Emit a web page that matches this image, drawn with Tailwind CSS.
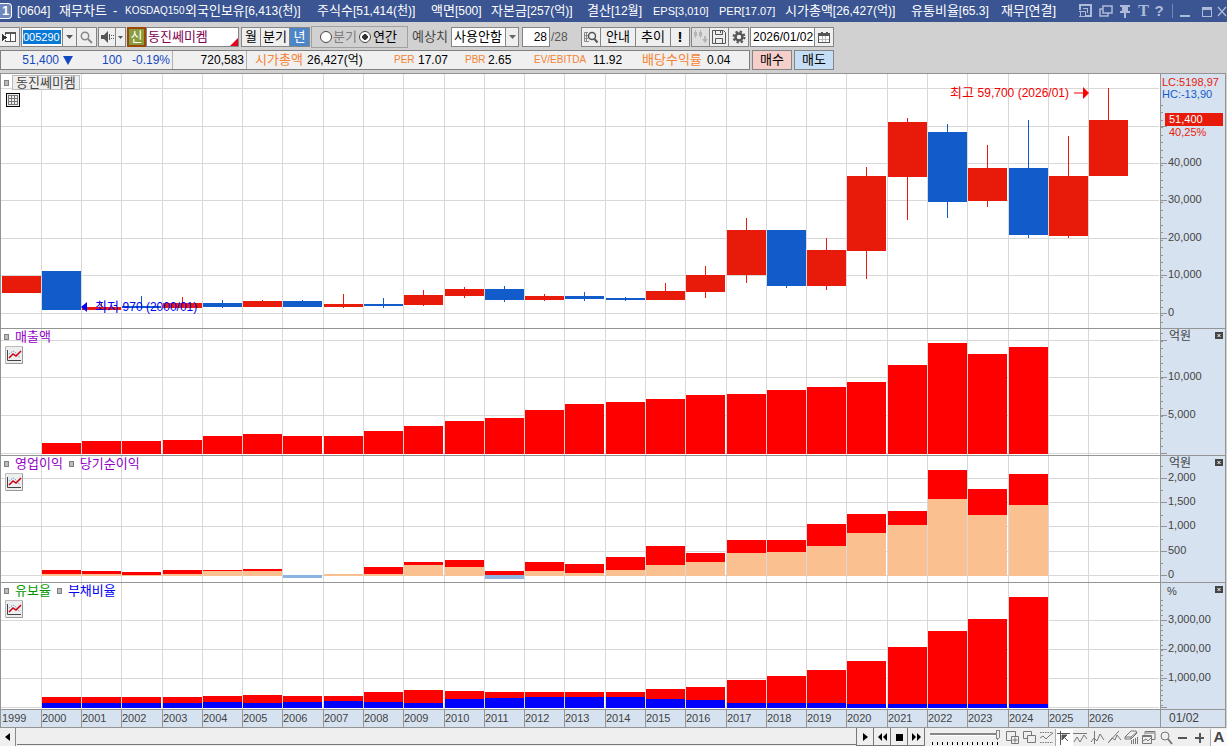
<!DOCTYPE html>
<html lang="ko">
<head>
<meta charset="utf-8">
<title>[0604] 재무차트</title>
<script src="https://cdn.jsdelivr.net/npm/@tailwindcss/browser@4"></script>
</head>
<body class="h-screen min-w-[1100px] flex flex-col overflow-hidden bg-[#d1d1d1] text-black text-[13px] leading-4 whitespace-nowrap font-['Liberation_Sans','Noto_Sans_CJK_KR',sans-serif]">

<header class="h-[22px] shrink-0 flex items-center bg-[#3a5592] text-white">
  <span class="w-3 h-4 mr-[5px] border border-l-0 border-white rounded-r-sm bg-[#6d86bb] text-center leading-[14px] font-bold">1</span>
  <h1 class="flex gap-[6px] shrink-0 *:shrink-0">
    <span class="w-9 text-xs leading-4">[0604]</span><span class="w-12">재무차트</span><span class="w-1.5">-</span><span class="w-[54px] text-[10px] leading-4">KOSDAQ150</span>
    <span class="w-[126px]">외국인보유<span class="text-xs">[6,413(천)]</span></span><span class="w-[108px]">주식수<span class="text-xs">[51,414(천)]</span></span><span class="w-[54px]">액면<span class="text-xs">[500]</span></span>
    <span class="w-[90px]">자본금<span class="text-xs">[257(억)]</span></span><span class="w-[60px]">결산<span class="text-xs">[12월]</span></span><span class="w-[60px] text-[11px] leading-4">EPS[3,010]</span><span class="w-[60px] text-[11px] leading-4">PER[17.07]</span>
    <span class="w-[120px]">시가총액<span class="text-xs">[26,427(억)]</span></span><span class="w-[84px]">유통비율<span class="text-xs">[65.3]</span></span><span>재무[연결]</span>
  </h1>
  <div class="ml-auto flex items-center text-[#aebbd8]">
    <button aria-label="축소" class="w-5"><svg width="14" height="14" fill="none" stroke="currentColor" shape-rendering="crispEdges"><path d="M1 6V1h11v11H7" stroke-width="2"/><path d="M0 7.500h6.500V13M1.500 7v5M0 12.500h8M4 4.500h4.500V9"/></svg></button>
    <button aria-label="복제" class="w-5"><svg width="14" height="14" fill="none" stroke="currentColor" stroke-width="1.500"><path d="M4 2h9v7H4zM4 5H1v7h8V9"/></svg></button>
    <button aria-label="고정" class="w-[18px]"><svg width="12" height="14" fill="currentColor"><path d="M1 1h10v2H9v4h2v2H7v5H5V9H1V7h2V3H1z"/></svg></button>
    <button aria-label="글꼴" class="w-[13px] mr-1 font-bold text-[16px] font-['Liberation_Serif']">T</button>
    <button aria-label="도움말" class="w-[10px] mr-2 font-bold text-[15px]">?</button>
    <span class="w-px h-3.5 mr-[7px] bg-[#7388b8]"></span>
    <button aria-label="최소화" class="w-[22px]"><svg width="12" height="14" fill="currentColor"><path d="M0 11h10v2H0z"/></svg></button>
    <button aria-label="최대화" class="w-[15px]"><svg width="12" height="14" fill="none" stroke="currentColor" shape-rendering="crispEdges"><path d="M.5 3.500h9v9h-9z"/><path d="M0 4h10" stroke-width="3"/></svg></button>
    <button aria-label="닫기" class="w-[10px]"><svg width="10" height="14" fill="none" stroke="currentColor" stroke-width="1.200"><path d="M1 3l8 9M9 3l-8 9"/></svg></button>
  </div>
</header>

<div class="h-7 shrink-0 flex items-center pt-0.5 *:shrink-0">
  <button aria-label="창 목록" class="w-5 h-5 mr-px border border-l-0 border-[#858585] bg-[#efefef] flex items-center justify-center"><svg width="15" height="14" shape-rendering="crispEdges"><path d="M3.500 5V2.500h10v9h-10V10" fill="#fff" stroke="#555"/><path d="M4 2h10v2H4zM8 2h1v9H8z" fill="#555"/><path d="M0 4l5 3.500L0 11z" fill="#333"/></svg></button>
  <div class="flex h-5 border border-[#858585] divide-x divide-[#858585] bg-[#efefef] mr-px">
    <label class="w-[41px] bg-white py-0.5 px-px"><input aria-label="종목코드" value="005290" class="block w-[38px] h-3.5 bg-[#0878d7] text-white text-[11px] outline-none"></label>
    <button aria-label="종목 목록" class="w-[14px] flex items-center justify-center"><svg width="7" height="4" fill="#555"><path d="M0 0h7L3.500 4z"/></svg></button>
    <button aria-label="종목 검색" class="w-[19px] flex items-center justify-center"><svg width="13" height="13" fill="none" stroke="#888" stroke-width="1.500"><circle cx="5" cy="5" r="3.700"/><path d="M8 8l4 4" stroke-width="2"/></svg></button>
  </div>
  <div class="flex h-5 border border-[#858585] divide-x divide-[#858585] bg-[#efefef] mr-px">
    <button aria-label="소리" class="w-[17px] flex items-center justify-center"><svg width="15" height="12" fill="#555"><path d="M1 4h3l4-4v12L4 8H1z"/><path d="M9 3h1v6H9zM11 4h1v1h-1zM11 7h1v1h-1zM13 4h1v1h-1zM13 7h1v1h-1z"/></svg></button>
    <button aria-label="소리 메뉴" class="w-[9px] flex items-center justify-center"><svg width="5" height="3" fill="#555"><path d="M0 0h5L2.500 3z"/></svg></button>
  </div>
  <div class="flex h-5 mr-0.5">
    <button class="w-[19px] border-2 border-[#984807] bg-[#8a9a3c] text-white text-center leading-[14px]">신</button>
    <span class="relative w-[93px] border border-[#858585] bg-white text-[#800050] pl-px leading-[18px]">동진쎄미켐<svg class="absolute right-0 bottom-0" width="8" height="8" fill="#e00020"><path d="M8 0v8H0z"/></svg></span>
  </div>
  <div class="flex h-5 border border-[#858585] divide-x divide-[#858585] bg-[#efefef] mr-px leading-[18px]">
    <button class="w-[19px]">월</button><button class="w-[29px]">분기</button><button class="w-[19px] bg-[#4d86c6] text-white">년</button>
  </div>
  <fieldset class="flex items-center h-[22px] w-[97px] border border-[#a0a0a0] pl-1.5">
    <label class="flex items-center gap-px text-[#7d7d7d]"><input type="radio" name="term" class="appearance-none m-0.5 mr-0 size-3 rounded-full border border-[#444] bg-white">분기</label>
    <label class="flex items-center gap-0.5"><input type="radio" name="term" checked class="appearance-none m-0.5 mr-0 size-3 rounded-full border border-[#444] bg-white checked:bg-[radial-gradient(#333_38%,white_42%)]">연간</label>
  </fieldset>
  <label for="est" class="ml-1 w-[39px] text-[#444]">예상치</label>
  <div class="relative w-[68px] h-5 mr-[3px]">
    <select id="est" class="appearance-none block w-full h-5 border border-[#858585] bg-white pl-0.5 outline-none"><option>사용안함</option></select>
    <span class="absolute right-px inset-y-px w-[13px] border-l border-[#858585] bg-[#efefef] flex items-center justify-center pointer-events-none"><svg width="7" height="4" fill="#666"><path d="M0 0h7L3.500 4z"/></svg></span>
  </div>
  <input aria-label="표시 개수" value="28" class="w-7 h-5 border border-[#858585] bg-white text-right text-xs pr-0.5"><span class="w-[31px] text-xs text-[#555] pl-px">/28</span>
  <div class="flex h-5 border border-[#858585] divide-x divide-[#858585] bg-[#efefef] mr-px">
    <button aria-label="표 검색" class="w-[19px] flex items-center justify-center"><svg width="16" height="14" fill="none" stroke="#888"><path d="M5 2.500H1.500v9H6M1 5.500h4M1 8.500h4M3.500 2v9"/><circle cx="9" cy="6" r="3.500" stroke="#555" stroke-width="1.500"/><path d="M11.500 9l3 3.500" stroke="#555" stroke-width="2"/></svg></button>
    <button class="w-[35px]">안내</button><button class="w-[35px]">추이</button><button class="w-[18px] font-bold text-[15px]">!</button>
  </div>
  <div class="flex h-5 border border-[#858585] divide-x divide-[#858585] bg-[#efefef] mr-px">
    <button aria-label="캔들" class="w-[18px] flex items-center justify-center bg-[#dedede]"><svg width="15" height="14" fill="#b5b5b5"><path d="M2 0h1v2h1v4H3v2H2V6H1V2h1zM7 0h1v2h1v4H8v2H7V6H6V2h1zM11 6h2v3h2l-3 4-3-4h2z"/></svg></button>
    <button aria-label="저장" class="w-[19px] flex items-center justify-center"><svg width="14" height="14" fill="#eee" stroke="#555"><path d="M.5.5h11l2 2v11H.5zM3.500.5v4h7v-4M3.500 13.500v-5h7v5M8.500 1v2"/></svg></button>
    <button aria-label="설정" class="w-[19px] flex items-center justify-center"><svg width="14" height="14" fill="none" stroke="#555"><circle cx="7" cy="7" r="3.500" stroke-width="2.500"/><circle cx="7" cy="7" r="5.500" stroke-width="2" stroke-dasharray="2.300 2.020"/></svg></button>
  </div>
  <div class="flex h-5 border border-[#858585] divide-x divide-[#858585]">
    <input aria-label="날짜" value="2026/01/02" class="w-[64px] bg-white pl-0.5 text-xs">
    <button aria-label="달력" class="w-[18px] bg-[#efefef] flex items-center justify-center"><svg width="12" height="11" fill="none" stroke="#555" shape-rendering="crispEdges"><path d="M.5 1.500h11v9H.5z" fill="#fff"/><path d="M0 2.500h12M3.500 0v3M8.500 0v3" stroke-width="2"/><path d="M1 7.500h10M4.500 4v6M7.500 4v6" stroke="#bbb"/></svg></button>
  </div>
</div>

<div class="h-5 shrink-0 flex gap-0.5 leading-[18px]">
  <dl class="flex w-[750px] border border-[#808080] bg-[#f0f0f0] divide-x divide-[#b0b0b0] text-xs leading-[18px]">
    <div class="flex w-[172px] text-[#1548c0] justify-end pr-0.5"><dd class="flex items-center">51,400<svg class="ml-1" width="10" height="9" fill="#1548c0"><path d="M0 0h10L5 9z"/></svg></dd><dd class="w-[49px] text-right">100</dd><dd class="w-[48px] text-right">-0.19%</dd></div>
    <dd class="w-[74px] text-right pr-0.5">720,583</dd>
    <div class="flex flex-1 pl-2">
      <dt class="w-[52px] text-[#f58233] text-[13px]">시가총액</dt><dd class="w-[87px]">26,427(억)</dd>
      <dt class="w-6 text-[#f58233] text-[10px]">PER</dt><dd class="w-[47px]">17.07</dd>
      <dt class="w-[23px] text-[#f58233] text-[10px]">PBR</dt><dd class="w-[46px]">2.65</dd>
      <dt class="w-[59px] text-[#f58233] text-[10px]">EV/EBITDA</dt><dd class="w-[49px]">11.92</dd>
      <dt class="w-[65px] text-[#f58233] text-[13px]">배당수익률</dt><dd>0.04</dd>
    </div>
  </dl>
  <button class="w-10 border border-[#858585] bg-[#f7cfca]">매수</button>
  <button class="w-10 border border-[#858585] bg-[#c6def5]">매도</button>
</div>

<main class="mt-[3px] mr-px flex-1 min-h-0 flex flex-col border border-[#949494] bg-white text-[#444]">
  <div class="flex-1 min-h-0 grid grid-rows-[254fr_126fr_126fr_126fr] gap-px bg-[#949494]">

    <section class="relative flex min-h-0 bg-white">
      <svg id="price" class="flex-1 min-w-0 h-full" viewBox="1 74 1159 254" preserveAspectRatio="none" shape-rendering="crispEdges"></svg>
      <div id="priceAxis" class="relative w-[65px] shrink-0 border-l border-[#949494] bg-[#d7e2f0]"></div>
      <div class="absolute left-[3px] top-px flex items-center gap-[3px]"><span class="w-[5px] h-1.5 border border-[#808080] bg-[#bbb]"></span><span class="h-[15px] leading-[14px] px-[3px] border border-[#bbb] bg-[#eee]">동진쎄미켐</span></div>
      <button aria-label="데이터 표" class="absolute left-[5px] top-[19px]"><svg width="14" height="14" fill="none" shape-rendering="crispEdges"><path d="M.5.500h13v13H.5z" fill="#eee" stroke="#000"/><path d="M2.500 2.500h9v9h-9zM2 5.500h9M2 8.500h9M5.500 2v9M8.500 2v9" stroke="#777"/></svg></button>
      <span class="absolute left-[80px] top-[225px] flex items-center gap-[8px] text-[#0000f0]"><svg width="6" height="10" fill="#00f"><path d="M0 5l6-5v10z"/></svg><span>최저 <span class="text-xs">970 (2000/01)</span></span></span>
      <span class="absolute right-[136px] top-[11px] flex items-center gap-[5px] text-[#f00000]"><span>최고 <span class="text-xs">59,700 (2026/01)</span></span><svg width="15" height="12" fill="#f00"><path d="M0 5.500h9V0l6 6-6 6V6.500H0z"/></svg></span>
      <div class="absolute right-0 top-0 w-[65px] pl-0.5 text-[11px] leading-3 pt-0.5"><p class="text-[#e81a0a]">LC:5198,97</p><p class="text-[#125bca]">HC:-13,90</p></div>
      <div class="absolute right-[2px] top-[39px] w-[58px] text-[#e81a0a] text-[11px] leading-[13px]"><p class="bg-[#e81a0a] text-white pl-1">51,400</p><p class="pl-1">40,25%</p></div>
    </section>

    <section class="relative flex min-h-0 bg-white">
      <svg id="sales" class="flex-1 min-w-0 h-full" viewBox="1 329 1159 126" preserveAspectRatio="none" shape-rendering="crispEdges"></svg>
      <div id="salesAxis" class="relative w-[65px] shrink-0 border-l border-[#949494] bg-[#d7e2f0]"></div>
      <div class="absolute left-[3px] top-0 flex items-center gap-[6px] text-[#9400c8]"><span class="w-[5px] h-1.5 border border-[#808080] bg-[#bbb]"></span>매출액</div>
      <button aria-label="매출액 차트" class="absolute left-1 top-[17px]"><svg width="18" height="18"><use href="#chartIcon"/></svg></button>
      <span class="absolute right-[34px] top-0 text-xs leading-[14px]">억원</span><button aria-label="매출액 닫기" class="absolute right-[2px] top-[3px]"><svg width="8" height="7"><use href="#closeIcon"/></svg></button>
    </section>

    <section class="relative flex min-h-0 bg-white">
      <svg id="profit" class="flex-1 min-w-0 h-full" viewBox="1 456 1159 126" preserveAspectRatio="none" shape-rendering="crispEdges"></svg>
      <div id="profitAxis" class="relative w-[65px] shrink-0 border-l border-[#949494] bg-[#d7e2f0]"></div>
      <div class="absolute left-[3px] top-0 flex items-center gap-[6px] text-[#9400c8]"><span class="w-[5px] h-1.5 border border-[#808080] bg-[#bbb]"></span>영업이익<span class="w-[5px] h-1.5 border border-[#808080] bg-[#bbb]"></span>당기순이익</div>
      <button aria-label="이익 차트" class="absolute left-1 top-[17px]"><svg width="18" height="18"><use href="#chartIcon"/></svg></button>
      <span class="absolute right-[34px] top-0 text-xs leading-[14px]">억원</span><button aria-label="이익 닫기" class="absolute right-[2px] top-[3px]"><svg width="8" height="7"><use href="#closeIcon"/></svg></button>
    </section>

    <section class="relative flex min-h-0 bg-white">
      <svg id="ratio" class="flex-1 min-w-0 h-full" viewBox="1 583 1159 126" preserveAspectRatio="none" shape-rendering="crispEdges"></svg>
      <div id="ratioAxis" class="relative w-[65px] shrink-0 border-l border-[#949494] bg-[#d7e2f0]"></div>
      <div class="absolute left-[3px] top-0 flex items-center gap-[6px] text-[#009600]"><span class="w-[5px] h-1.5 border border-[#808080] bg-[#bbb]"></span>유보율<span class="w-[5px] h-1.5 border border-[#808080] bg-[#bbb]"></span><span class="text-[#0000f0]">부채비율</span></div>
      <button aria-label="비율 차트" class="absolute left-1 top-[17px]"><svg width="18" height="18"><use href="#chartIcon"/></svg></button>
      <span class="absolute left-[calc(100%_-_58px)] top-0 text-[11px]">%</span><button aria-label="비율 닫기" class="absolute right-[2px] top-[3px]"><svg width="8" height="7"><use href="#closeIcon"/></svg></button>
    </section>
  </div>

  <div class="h-[18px] shrink-0 flex border-t border-[#949494] bg-[#d7e2f0] text-[11px] leading-[16px]">
    <div id="years" class="flex-1 grid grid-cols-[40fr_40fr_40fr_41fr_40fr_40fr_40fr_41fr_40fr_40fr_41fr_40fr_40fr_40fr_41fr_40fr_40fr_41fr_40fr_40fr_40fr_41fr_40fr_40fr_41fr_40fr_40fr_72fr]"></div>
    <span class="w-[65px] border-l border-[#949494] pl-2 text-xs leading-4">01/02</span>
  </div>
</main>

<footer class="h-[18px] shrink-0 flex bg-[#efefef]">
  <button aria-label="왼쪽" class="w-4 border-r border-[#888] flex items-center justify-center"><svg width="5" height="8"><path d="M5 0v8L0 4z"/></svg></button>
  <div class="flex-1 ml-px mb-px border-b border-[#777] bg-[#efefef]"></div>
  <div class="flex divide-x divide-[#777] border-x border-[#777] shadow-[inset_0_-1px_#777]">
    <button aria-label="오른쪽" class="w-[17px] flex items-center justify-center"><svg width="5" height="8"><path d="M0 0v8l5-4z"/></svg></button>
    <button aria-label="뒤로" class="w-[17px] flex items-center justify-center"><svg width="9" height="8"><path d="M4 0v8L0 4zM9 0v8L5 4z"/></svg></button>
    <button aria-label="정지" class="w-[17px] flex items-center justify-center"><svg width="7" height="7"><path d="M0 0h7v7H0z"/></svg></button>
    <button aria-label="앞으로" class="w-4 flex items-center justify-center"><svg width="9" height="8"><path d="M0 0v8l4-4zM5 0v8l4-4z"/></svg></button>
  </div>
  <div class="relative ml-1 mr-1 w-[72px]"><input type="range" aria-label="재생 속도" min="0" max="100" value="100" class="absolute inset-0 w-full opacity-0"><svg width="72" height="18" shape-rendering="crispEdges"><path d="M1 5h68v2H1z" fill="#888"/><path d="M1 7h66v1H1z" fill="#fff"/><path d="M67.500 2.500h3v7l-2 2-1-2z" fill="#eee" stroke="#888"/><path d="M3 15.500h66" stroke="#000" stroke-width="3" stroke-dasharray="1 4"/></svg></div>
  <div id="tools" class="flex items-center text-[#555]">
    <button aria-label="추가" class="w-[17px]"><svg width="15" height="15" fill="none" stroke="#777"><path d="M1.500 1.500h9v9h-9z"/><path d="M6.500 6.500h7v7h-7zM10 7.500v5M7.500 10h5" fill="#eee"/></svg></button>
    <button aria-label="겹치기" class="w-[17px]"><svg width="15" height="15" fill="none" stroke="#777"><path d="M1.500 1.500h8v7h-8z"/><path d="M5.500 5.500h8v7h-8z" fill="#eee"/></svg></button>
    <button aria-label="영역" class="w-4"><svg width="15" height="15" fill="none" stroke="#777"><path d="M1 2.500h13M1 12.500h13" stroke-dasharray="1.500 1"/><path d="M1 8l3-2 3 3 3-3 4-3"/></svg></button>
    <button aria-label="십자선" class="w-[18px] h-[17px] border-l border-[#aaa] bg-white"><svg width="15" height="15" fill="none" stroke="#555"><path d="M1 3.500h13M4.500 1v14M6 5l6 6"/><path d="M6 5h5L6 10z" fill="#555"/></svg></button>
    <button aria-label="추세선" class="w-[17px]"><svg width="15" height="15" fill="none" stroke="#777"><path d="M0 3.500h14M1 12l3-5 3 5 4-7 3 4"/></svg></button>
    <button aria-label="수직선" class="w-[17px]"><svg width="15" height="15" fill="none" stroke="#777"><path d="M4.500 1v13M1 12l3-4 3 3 3-7 4 6"/></svg></button>
    <button aria-label="사선" class="w-[17px]"><svg width="15" height="15" fill="none" stroke="#777"><path d="M1 13L12 1M2 12l3-4 3 2 2-5 4 5"/></svg></button>
    <button aria-label="지우개" class="w-[17px]"><svg width="15" height="15" fill="none" stroke="#777"><path d="M1 7l6-6h5l1 2-6 6H1zM1 7h6l6-5M7 7v2M7.500 10v4M9.500 9v5M11.500 8v6M13.500 7v7"/></svg></button>
    <button aria-label="차트 복사" class="w-[18px]"><svg width="15" height="15" fill="none" stroke="#777"><path d="M4 4.500V1.500h10v8h-3"/><path d="M1.500 5.500h9v8h-9z" fill="#eee"/><path d="M2 11l3-2 2 2 3-3M1.500 6.500h9M5 3h8"/></svg></button>
    <button aria-label="돋보기" class="w-[17px]"><svg width="15" height="15" fill="none" stroke="#777"><circle cx="6" cy="6" r="4"/><path d="M9 9l4 5" stroke-width="2"/></svg></button>
    <button aria-label="축소" class="w-[17px]"><svg width="13" height="15" fill="#555"><path d="M2 7h9v2H2z"/></svg></button>
    <button aria-label="확대" class="w-[17px]"><svg width="13" height="15" fill="#555"><path d="M2 7h9v2H2zM6 3h2v10H6z"/></svg></button>
    <button class="w-[17px] h-[17px] border-l border-[#aaa] bg-[#fafafa] font-bold text-[15px] text-[#444]">A</button>
  </div>
</footer>

<svg width="0" height="0" class="absolute">
  <symbol id="chartIcon" viewBox="0 0 18 18"><path d="M.5.500h17v17H.5z" fill="#eee" stroke="#bbb"/><path d="M17.500 1v16.500H1" fill="none" stroke="#999"/><path d="M2.500 4v10.500H16" fill="none" stroke="#444"/><path d="M4 8l4-3 3 2 4 5" fill="none" stroke="#6b9fd0" stroke-dasharray="1.500 1"/><path d="M4 12l4-4 3 2 5-5" fill="none" stroke="#d00010" stroke-width="1.500"/></symbol>
  <symbol id="closeIcon" viewBox="0 0 8 7"><path d="M0 0h8v7H0z" fill="#444"/><path d="M2.500 2l3 3M5.500 2l-3 3" stroke="#fff"/></symbol>
</svg>

<script>
const NS = 'http://www.w3.org/2000/svg';
const grid = [1,41,81,121,162,202,242,282,323,363,403,444,484,524,564,605,645,685,726,766,806,846,887,927,967,1008,1048,1088];
const RED = '#e81a0a', BLUE = '#125bca';
function rect(svg, x, y, w, h, fill) {
  const r = document.createElementNS(NS, 'rect');
  for (const [k, v] of Object.entries({x, y, width: w, height: h, fill})) r.setAttribute(k, v);
  svg.appendChild(r);
}
function panel(id, top, bottom, lines) {
  const svg = document.getElementById(id);
  grid.slice(1).forEach(x => rect(svg, x, top, 1, bottom - top, '#d8d8d8'));
  lines.forEach(y => rect(svg, 1, y, 1158, 1, '#d8d8d8'));
  return svg;
}
// Scale column: major ticks with labels, minor ticks between them
function axis(id, top, height, labels, first, step) {
  const box = document.getElementById(id);
  const add = (cls, y, text) => { const e = document.createElement('span'); e.className = cls; e.style.top = (y - top) / height * 100 + '%'; e.textContent = text; box.appendChild(e); };
  for (let y = first; y < top + height - 1; y += step) add('absolute left-0 w-0.5 h-px bg-[#949494]', Math.round(y), '');
  labels.forEach(([y, t]) => { add('absolute left-0 w-1.5 h-px bg-[#949494]', y, ''); if (t) add('absolute left-[7px] -translate-y-[7px] text-[11px] leading-3', y, t); });
}
// Each candle: colour, body top, body bottom, wick top, wick bottom
const candles = [[RED,276,293,276,293],[BLUE,271,310,271,310],[RED,307,310,303,310],[BLUE,306,308,296,308],[RED,303,308,297,308],[BLUE,303,307,300,308],[RED,301,307,300,307],[BLUE,301,307,300,307],[RED,304,307,294,308],[BLUE,304,306,298,308],[RED,295,305,290,306],[RED,289,296,287,298],[BLUE,289,300,286,302],[RED,296,300,294,301],[BLUE,296,299,292,301],[BLUE,298,300,297,301],[RED,291,300,283,300],[RED,275,292,266,298],[RED,230,275,218,283],[BLUE,230,286,230,288],[RED,250,286,238,290],[RED,176,251,167,279],[RED,122,177,118,220],[BLUE,132,202,124,218],[RED,168,201,145,207],[BLUE,168,235,120,238],[RED,176,236,136,238],[RED,120,176,88,176]];
const price = panel('price', 74, 328, [88,126,163,200,238,275,313]);
candles.forEach(([c, t, b, wt, wb], i) => { rect(price, grid[i] + 20, wt, 1, wb - wt, c); rect(price, grid[i] + 1, t, 39, b - t, c); });
axis('priceAxis', 74, 254, [[126,''],[163,'40,000'],[200,'30,000'],[238,'20,000'],[275,'10,000'],[313,'0']], 104.5, 7.5);

const sales = panel('sales', 329, 455, [340,377,415,453]);
[443,441,441,440,436,434,436,436,431,426,421,418,410,404,402,399,395,394,390,387,382,365,343,354,347].forEach((y, i) => rect(sales, grid[i + 1] + 1, y, 39, 454 - y, '#f00'));
axis('salesAxis', 329, 126, [[340,''],[377,'10,000'],[415,'5,000'],[453,'']], 333, 7.5);

const profit = panel('profit', 456, 582, [478,502,526,551,575]);
[[570,574],[571,574],[572,575],[570,574],[570,571],[569,571],[575,575,578],[574,574],[567,574],[562,565],[560,567],[571,575,579],[562,571],[564,573],[557,570],[546,565],[553,562],[540,553],[540,552],[524,546],[514,533],[511,525],[470,499],[489,515],[474,505]].forEach(([t, m, neg], i) => {
  const x = grid[i + 1] + 1;
  rect(profit, x, t, 39, m - t, '#f00');
  if (neg) rect(profit, x, 575, 39, neg - 575, '#8db4e2'); else rect(profit, x, m, 39, 576 - m, '#fac090');
});
axis('profitAxis', 456, 126, [[478,'2,000'],[502,'1,500'],[526,'1,000'],[551,'500'],[575,'0']], 466, 24.3);

const ratio = panel('ratio', 583, 709, [620,649,678,707]);
[[697,703],[697,703],[697,703],[697,703],[696,702],[695,703],[696,702],[696,701],[692,702],[690,703],[691,699],[692,698],[692,697],[692,697],[692,697],[689,699],[687,700],[680,703],[676,703],[670,703],[661,704],[647,704],[631,704],[619,704],[597,704]].forEach(([t, m], i) => {
  const x = grid[i + 1] + 1;
  rect(ratio, x, t, 39, m - t, '#f00'); rect(ratio, x, m, 39, 708 - m, '#00f');
});
axis('ratioAxis', 583, 126, [[620,'3,000,00'],[649,'2,000,00'],[678,'1,000,00'],[707,'']], 600, 5);

grid.forEach((_, i) => {
  const s = document.createElement('span');
  s.className = i ? 'border-l border-[#949494]' : 'pl-px';
  s.textContent = 1999 + i;
  document.getElementById('years').appendChild(s);
});
</script>
</body>
</html>
